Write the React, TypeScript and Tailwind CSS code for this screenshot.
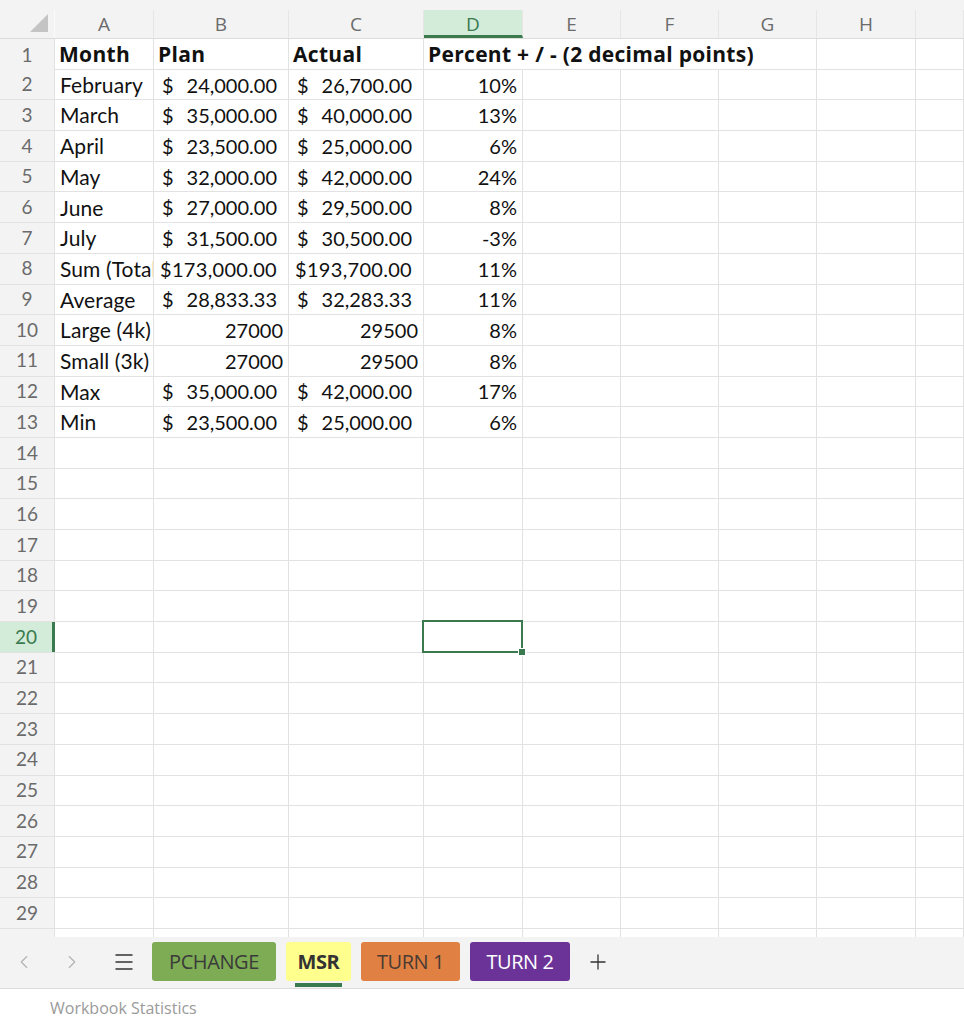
import React from 'react';
import { ChevronLeft, ChevronRight, Menu, Plus } from 'lucide-react';

type Cell =
    | { kind: 'text'; value: string; bold?: boolean }
    | { kind: 'money'; value: string; tight?: boolean }
    | { kind: 'num'; value: string }
    | { kind: 'empty' };

const cols = ['A', 'B', 'C', 'D', 'E', 'F', 'G', 'H', ''];
const gridCols = 'grid grid-cols-[55px_99px_135px_135px_99px_98px_98px_98px_99px_1fr]';

const t = (value: string, bold = false): Cell => ({ kind: 'text', value, bold });
const m = (value: string, tight = false): Cell => ({ kind: 'money', value, tight });
const n = (value: string): Cell => ({ kind: 'num', value });

const data: Cell[][] = [
    [t('Month', true), t('Plan', true), t('Actual', true), t('Percent + / - (2 decimal points)', true)],
    [t('February'), m('24,000.00'), m('26,700.00'), n('10%')],
    [t('March'), m('35,000.00'), m('40,000.00'), n('13%')],
    [t('April'), m('23,500.00'), m('25,000.00'), n('6%')],
    [t('May'), m('32,000.00'), m('42,000.00'), n('24%')],
    [t('June'), m('27,000.00'), m('29,500.00'), n('8%')],
    [t('July'), m('31,500.00'), m('30,500.00'), n('-3%')],
    [t('Sum (Total)'), m('173,000.00', true), m('193,700.00', true), n('11%')],
    [t('Average'), m('28,833.33'), m('32,283.33'), n('11%')],
    [t('Large (4k)'), n('27000'), n('29500'), n('8%')],
    [t('Small (3k)'), n('27000'), n('29500'), n('8%')],
    [t('Max'), m('35,000.00'), m('42,000.00'), n('17%')],
    [t('Min'), m('23,500.00'), m('25,000.00'), n('6%')],
];

const ROWS = 30;

const CellContent: React.FC<{ cell: Cell }> = ({ cell }) => {
    if (cell.kind === 'text') {
        return cell.bold ? (
            <span className="pl-[4px] whitespace-nowrap font-['Open_Sans',sans-serif] font-bold text-[21px] tracking-[0.3px]">
                {cell.value}
            </span>
        ) : (
            <span className="pl-[5px] whitespace-nowrap text-[21px] tracking-[0.1px]">{cell.value}</span>
        );
    }
    if (cell.kind === 'money') {
        if (cell.tight) {
            return <span className="w-full text-right pr-[11px] whitespace-nowrap tracking-[0.3px]">${cell.value}</span>;
        }
        return (
            <span className="flex w-full justify-between whitespace-nowrap pr-[11px] pl-[8px]">
                <span>$</span>
                <span>{cell.value}</span>
            </span>
        );
    }
    if (cell.kind === 'num') {
        return <span className="w-full text-right pr-[5px] whitespace-nowrap">{cell.value}</span>;
    }
    return null;
};

const Tab: React.FC<{ label: string; className: string; active?: boolean }> = ({ label, className, active }) => (
    <div className="relative flex flex-col items-center">
        <div className={`h-[39px] flex items-center justify-center rounded-[3px] text-[20px] tracking-[-0.4px] ${className}`}>
            {label}
        </div>
        {active && <div className="absolute -bottom-[6px] h-[4px] w-[47px] bg-[#3b7a4e]" />}
    </div>
);

export default function App() {
    return (
        <div className="w-[964px] h-[1024px] bg-white flex flex-col overflow-hidden font-['Lato',sans-serif] text-[#111]">
            <div className="h-[10px] bg-[#f3f3f3] shrink-0" />

            {/* column header */}
            <div className={`${gridCols} h-[29px] shrink-0 bg-[#f3f3f3] border-b border-[#dcdcdc] font-['Open_Sans',sans-serif] text-[19px] text-[#6b6b6b]`}>
                <div className="relative border-r border-[#fbfbfb]">
                    <svg className="absolute left-[30px] top-[4px]" width="18" height="18" viewBox="0 0 18 18">
                        <polygon points="18,0 18,18 0,18" fill="#c4c4c4" />
                    </svg>
                </div>
                {cols.map((c, i) => (
                    <div
                        key={i}
                        className={`flex items-center justify-center border-r border-[#e6e6e6] leading-none ${c === 'D' ? 'bg-[#d3ebd9] text-[#3b7a4e] border-b-[3px] border-b-[#3b7a4e] pt-[3px]' : ''}`}
                    >
                        {c}
                    </div>
                ))}
            </div>

            {/* rows */}
            <div className="h-[898px] shrink-0 overflow-hidden text-[20px]">
                {Array.from({ length: ROWS }, (_, r) => {
                    const rowNum = r + 1;
                    const row = data[r] ?? [];
                    const selected = rowNum === 20;
                    return (
                        <div key={r} className={`${gridCols} h-[30.7px] border-b border-[#e2e2e2]`}>
                            <div
                                className={`flex items-center justify-center text-[19px] ${selected ? 'bg-[#d3ebd9] text-[#3b7a4e] border-r-[3px] border-r-[#3b7a4e]' : 'bg-[#f3f3f3] text-[#6b6b6b] border-r border-[#e2e2e2]'}`}
                            >
                                {rowNum}
                            </div>
                            {cols.map((_, ci) => {
                                const cell = row[ci] ?? { kind: 'empty' };
                                const hideRight = rowNum === 1 && ci >= 3 && ci <= 5;
                                const isSel = selected && ci === 3;
                                const visible = (rowNum === 1 && ci === 3) || isSel;
                                return (
                                    <div
                                        key={ci}
                                        className={`relative flex items-center ${visible ? 'overflow-visible z-10' : 'overflow-hidden'} ${hideRight ? 'border-r border-transparent' : 'border-r border-[#e2e2e2]'}`}
                                    >
                                        <CellContent cell={cell} />
                                        {isSel && (
                                            <div className="absolute -left-[2px] -top-[2px] -right-[1px] -bottom-[1px] border-2 border-[#3b7a4e]">
                                                <div className="absolute -right-[4px] -bottom-[4px] w-[6px] h-[6px] bg-[#3b7a4e] outline outline-1 outline-white" />
                                            </div>
                                        )}
                                    </div>
                                );
                            })}
                        </div>
                    );
                })}
            </div>

            {/* sheet tabs */}
            <div className="h-[52px] shrink-0 bg-[#f3f3f3] border-b border-[#dcdcdc] flex items-center pb-[2px]">
                <div className="w-[48px] flex justify-center">
                    <ChevronLeft size={22} strokeWidth={1.2} className="text-[#b0b0b0]" />
                </div>
                <div className="w-[48px] flex justify-center">
                    <ChevronRight size={22} strokeWidth={1.2} className="text-[#b0b0b0]" />
                </div>
                <div className="w-[56px] flex justify-center">
                    <Menu size={24} strokeWidth={1.5} className="text-[#333]" />
                </div>
                <div className="flex items-center gap-[10px] font-['Open_Sans',sans-serif]">
                    <Tab label="PCHANGE" className="w-[124px] bg-[#7dac54] text-[#3a3a3a]" />
                    <Tab label="MSR" className="w-[65px] bg-[#ffff8d] text-[#333] font-bold" active />
                    <Tab label="TURN 1" className="w-[99px] bg-[#e08143] text-[#4a3b33]" />
                    <Tab label="TURN 2" className="w-[100px] bg-[#6b3398] text-white" />
                </div>
                <div className="w-[56px] flex justify-center">
                    <Plus size={24} strokeWidth={1.3} className="text-[#333]" />
                </div>
            </div>

            {/* status */}
            <div className="flex-1 bg-white pl-[50px] pt-[7px] text-[16px] text-[#9a9a9a] font-['Open_Sans',sans-serif]">
                Workbook Statistics
            </div>
        </div>
    );
}
